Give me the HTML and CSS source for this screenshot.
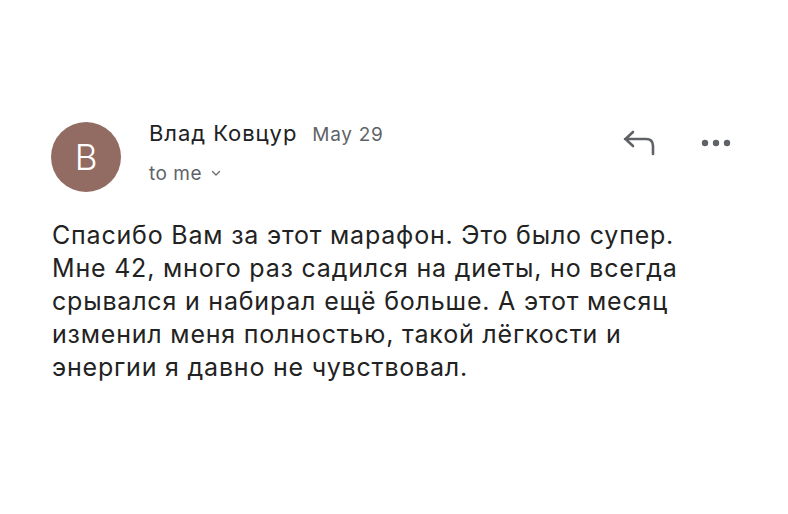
FILE: index.html
```html
<!DOCTYPE html>
<html lang="ru">
<head>
<meta charset="utf-8">
<link rel="stylesheet" href="styles.css">
</head>
<body>
<div class="mail">
  <div class="header">
    <div class="avatar">B</div>
    <div class="meta">
      <div class="from"><span class="name">Влад Ковцур</span><span class="date">May 29</span></div>
      <div class="to">to me <svg class="chev" width="10" height="7" viewBox="0 0 10 7"><path d="M1.5 1.5 L5 5 L8.5 1.5" fill="none" stroke="#6b6e72" stroke-width="1.4" stroke-linecap="round" stroke-linejoin="round"/></svg></div>
    </div>
    <div class="actions">
      <svg class="reply" width="34" height="26" viewBox="0 0 34 26"><path d="M3 9 H24 Q31 9 31 16 V24 M11 2 L3.5 9 L11 16" fill="none" stroke="#5f6368" stroke-width="2.6" stroke-linecap="round" stroke-linejoin="round"/></svg>
      <svg class="more" width="30" height="8" viewBox="0 0 30 8"><circle cx="4" cy="4" r="3.2" fill="#5f6368"/><circle cx="15" cy="4" r="3.2" fill="#5f6368"/><circle cx="26" cy="4" r="3.2" fill="#5f6368"/></svg>
    </div>
  </div>
  <p class="body">Спасибо Вам за этот марафон. Это было супер.<br>Мне 42, много раз садился на диеты, но всегда<br>срывался и набирал ещё больше. А этот месяц<br>изменил меня полностью, такой лёгкости и<br>энергии я давно не чувствовал.</p>
</div>
</body>
</html>
```
FILE: styles.css
```css
html, body {
  margin: 0;
  padding: 0;
  background: #ffffff;
}
body {
  width: 788px;
  height: 514px;
  font-family: "Inter", "Liberation Sans", sans-serif;
  color: #222222;
}
.mail {
  padding: 122px 0 0 51px;
}
.header {
  display: flex;
  align-items: flex-start;
}
.avatar {
  width: 70px;
  height: 70px;
  border-radius: 50%;
  background: #926b62;
  color: #ffffff;
  font-size: 35px;
  font-weight: 300;
  line-height: 70px;
  text-align: center;
  flex: none;
}
.meta {
  margin-left: 28px;
  margin-top: -2px;
}
.from {
  display: flex;
  align-items: baseline;
  height: 26px;
}
.name {
  font-size: 22px;
  letter-spacing: 0.95px;
  color: #202124;
}
.date {
  font-size: 19px;
  letter-spacing: 0.7px;
  color: #5f6368;
  margin-left: 15px;
}
.to {
  margin-top: 16px;
  font-size: 19px;
  letter-spacing: 0.5px;
  color: #5f6368;
  display: flex;
  align-items: center;
}
.chev {
  margin-left: 9px;
}
.actions {
  margin-left: auto;
  margin-right: 57px;
  display: flex;
  align-items: center;
  gap: 45px;
  padding-top: 8px;
}
.body {
  margin: 27px 0 0 1px;
  font-size: 25px;
  letter-spacing: 0.8px;
  line-height: 33px;
  color: #222222;
}
```
